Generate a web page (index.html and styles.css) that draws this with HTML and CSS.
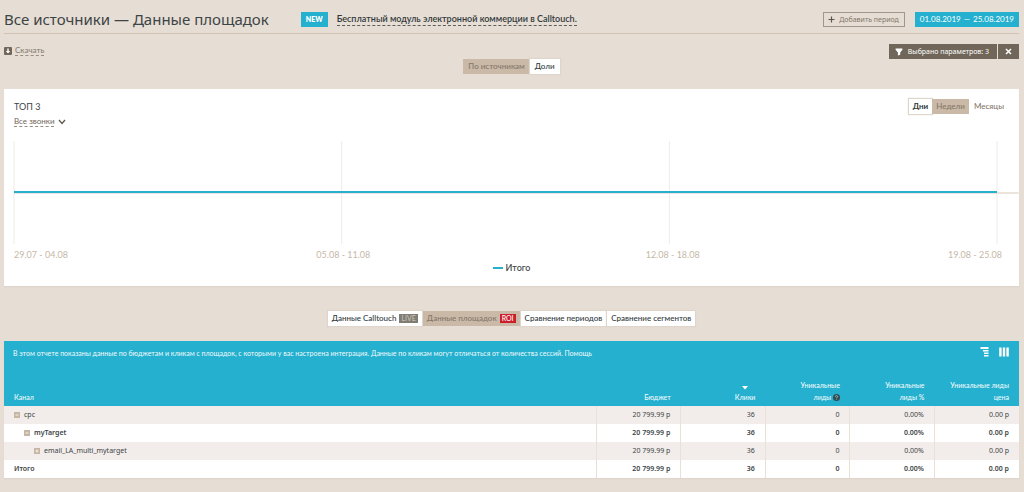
FILE: index.html
```html
<!DOCTYPE html>
<html lang="ru">
<head>
<meta charset="utf-8">
<title>Все источники — Данные площадок</title>
<link rel="stylesheet" href="styles.css">
</head>
<body>
<header class="header">
  <h1 class="title">Все источники — Данные площадок</h1>
  <div class="promo">
    <span class="promo-badge">NEW</span>
    <a class="promo-link" href="#">Бесплатный модуль электронной коммерции в Calltouch.</a>
  </div>
  <button class="add-period" type="button">
    <svg width="7" height="7" viewBox="0 0 7 7" aria-hidden="true"><path d="M3.5 .5v6M.5 3.5h6" stroke="#5f574c" stroke-width="1.2"/></svg>
    Добавить период
  </button>
  <button class="date-range" type="button"><span>01.08.2019</span><span>—</span><span>25.08.2019</span></button>
</header>

<div class="toolbar">
  <a class="download" href="#">
    <svg width="8" height="8" viewBox="0 0 8 8" aria-hidden="true"><rect width="8" height="8" rx="1" fill="#706659"/><path d="M3.3 1.5h1.4v2.4h1.5L4 6.4 1.8 3.9h1.5z" fill="#fff"/></svg>
    <span class="dashed">Скачать</span>
  </a>
  <div class="filter">
    <button class="filter-main" type="button">
      <svg width="8" height="8" viewBox="0 0 8 8" aria-hidden="true"><path d="M.6.5h6.8v1.3L5.2 4.5V6.8L2.9 7.6V4.5L.6 1.8z" fill="#fff"/></svg>
      Выбрано параметров: 3
    </button>
    <button class="filter-clear" type="button" aria-label="Сбросить">
      <svg width="7" height="7" viewBox="0 0 7 7" aria-hidden="true"><path d="M1 1l5 5M6 1L1 6" stroke="#fff" stroke-width="1.5"/></svg>
    </button>
  </div>
</div>

<div class="tabs view-tabs">
  <button class="tab active" type="button">По источникам</button>
  <button class="tab" type="button">Доли</button>
</div>

<section class="card">
  <div class="card-head">
    <div>
      <h2 class="card-title">ТОП 3</h2>
      <button class="metric" type="button">
        <span class="dashed">Все звонки</span>
        <svg width="8" height="6" viewBox="0 0 8 6" aria-hidden="true"><path d="M1 1l3 3.4L7 1" fill="none" stroke="#5f574c" stroke-width="1.3"/></svg>
      </button>
    </div>
    <div class="tabs period-tabs">
      <button class="tab strong" type="button">Дни</button>
      <button class="tab active" type="button">Недели</button>
      <button class="tab plain" type="button">Месяцы</button>
    </div>
  </div>
  <div class="chart">
    <svg class="plot" aria-hidden="true">
      <g stroke="#efebe5">
        <line x1="0" x2="0" y1="0" y2="100%"/>
        <line x1="33.33%" x2="33.33%" y1="0" y2="100%"/>
        <line x1="66.67%" x2="66.67%" y1="0" y2="100%"/>
        <line x1="100%" x2="100%" y1="0" y2="100%"/>
      </g>
      <line x1="0" x2="102.2%" y1="52" y2="52" stroke="#eae4dc" stroke-width="2"/>
      <line x1="0" x2="100%" y1="51" y2="51" stroke="#24b0ce" stroke-width="2"/>
    </svg>
    <div class="axis">
      <span>29.07 - 04.08</span>
      <span>05.08 - 11.08</span>
      <span>12.08 - 18.08</span>
      <span>19.08 - 25.08</span>
    </div>
  </div>
  <div class="legend"><span class="legend-mark"></span>Итого</div>
</section>

<div class="tabs report-tabs">
  <button class="tab" type="button">Данные Calltouch <span class="tag">LIVE</span></button>
  <button class="tab active" type="button">Данные площадок <span class="tag roi">ROI</span></button>
  <button class="tab" type="button">Сравнение периодов</button>
  <button class="tab" type="button">Сравнение сегментов</button>
</div>

<section class="report">
  <div class="report-note">
    <p class="note-text">В этом отчете показаны данные по бюджетам и кликам с площадок, с которыми у вас настроена интеграция. Данные по кликам могут отличаться от количества сессий. <a class="help" href="#">Помощь</a></p>
    <button class="icon-button" type="button" aria-label="Группировка">
      <svg width="10" height="10" viewBox="0 0 10 10" aria-hidden="true"><path d="M.5 0h8v2h-8zM3 3h5.500v1.500H3zM4 5.500h4.500V7H4zM4 8h4.500v1.500H4z" fill="#fff"/></svg>
    </button>
    <button class="icon-button" type="button" aria-label="Столбцы">
      <svg width="10" height="10" viewBox="0 0 10 10" aria-hidden="true"><path d="M.2.5h2.400v9H.2zM3.800.5h2.400v9H3.800zM7.400.5h2.400v9H7.400z" fill="#fff"/></svg>
    </button>
  </div>
  <table class="table">
    <thead>
      <tr>
        <th class="name">Канал</th>
        <th>Бюджет</th>
        <th><svg class="sort" width="6" height="4" viewBox="0 0 6 4" aria-hidden="true"><path d="M0 0h6L3 3.5z" fill="#fff"/></svg>Клики</th>
        <th>Уникальные<br>лиды <svg class="hint" width="7" height="7" viewBox="0 0 7 7" aria-hidden="true"><circle cx="3.5" cy="3.5" r="3.5" fill="#354b50"/><path d="M2.4 2.7c0-1.4 2.2-1.4 2.2 0 0 .8-1 .7-1 1.5M3.6 4.8v.8" fill="none" stroke="#9fd5e2" stroke-width=".8"/></svg></th>
        <th>Уникальные<br>лиды %</th>
        <th>Уникальные лиды<br>цена</th>
      </tr>
    </thead>
    <tbody>
      <tr>
        <td class="name"><button class="toggle" type="button" aria-label="Свернуть"><svg width="6" height="6" viewBox="0 0 6 6"><path d="M1.5 3h3" stroke="#fff" stroke-width=".8"/></svg></button>cpc</td>
        <td>20 799.99 р</td><td>36</td><td>0</td><td>0.00%</td><td>0.00 р</td>
      </tr>
      <tr class="bold">
        <td class="name level-1"><button class="toggle" type="button" aria-label="Свернуть"><svg width="6" height="6" viewBox="0 0 6 6"><path d="M1.5 3h3" stroke="#fff" stroke-width=".8"/></svg></button>myTarget</td>
        <td>20 799.99 р</td><td>36</td><td>0</td><td>0.00%</td><td>0.00 р</td>
      </tr>
      <tr>
        <td class="name level-2"><button class="toggle" type="button" aria-label="Развернуть"><svg width="6" height="6" viewBox="0 0 6 6"><path d="M1.5 3h3M3 1.5v3" stroke="#fff" stroke-width=".8"/></svg></button>email_LA_multi_mytarget</td>
        <td>20 799.99 р</td><td>36</td><td>0</td><td>0.00%</td><td>0.00 р</td>
      </tr>
      <tr class="bold">
        <td class="name">Итого</td>
        <td>20 799.99 р</td><td>36</td><td>0</td><td>0.00%</td><td>0.00 р</td>
      </tr>
    </tbody>
  </table>
</section>
</body>
</html>
```

FILE: styles.css
```css
* { box-sizing: border-box; }

body {
  margin: 0;
  padding: 0 5px 14px 4px;
  background: #e6ddd4;
  color: #3c4446;
  font: 8px/12px Lato, "Noto Sans", sans-serif;
}

button {
  margin: 0;
  padding: 0;
  border: 0;
  background: none;
  color: inherit;
  font: inherit;
  white-space: nowrap;
  cursor: pointer;
}

a { color: inherit; text-decoration: none; }
h1, h2, p { margin: 0; font-weight: 400; }
svg { flex: none; }

.dashed { border-bottom: 1px dashed #978c7f; line-height: 9px; }

.header {
  display: flex;
  align-items: center;
  padding: 5px 0 0;
  height: 34px;
  border-bottom: 1px solid #d3c1b1;
}
.title {
  font-family: "Noto Sans", sans-serif;
  font-size: 15px;
  line-height: 18px;
  white-space: nowrap;
}
.promo { display: flex; align-items: center; margin-left: 32px; }
.promo-badge {
  padding: 0 5px;
  background: #24b0ce;
  color: #fff;
  font-size: 7px;
  font-weight: 800;
  line-height: 15px;
}
.promo-link {
  margin-left: 9px;
  border-bottom: 1px dashed #5b5f5e;
  color: #30393b;
  font-size: 9px;
  font-weight: 600;
  line-height: 12px;
  white-space: nowrap;
}
.add-period {
  display: flex;
  align-items: center;
  gap: 4px;
  margin-left: auto;
  padding: 0 5px 0 4px;
  border: 1px solid #a0978b;
  color: #81776a;
  font-family: "Noto Sans", sans-serif;
  font-size: 7px;
  line-height: 13px;
}
.date-range {
  display: flex;
  gap: 3px;
  margin-left: 10px;
  padding: 0 5px;
  background: #24b0ce;
  color: #fff;
  line-height: 15px;
}

.toolbar {
  display: flex;
  align-items: flex-start;
  justify-content: space-between;
  padding-top: 10px;
}
.download {
  display: flex;
  align-items: center;
  gap: 3px;
  padding-top: 2px;
  color: #81776a;
}
.filter {
  display: flex;
  gap: 1px;
  color: #fff;
  font-family: "Noto Sans", sans-serif;
  font-size: 7px;
  line-height: 15px;
}
.filter-main, .filter-clear {
  display: flex;
  align-items: center;
  background: #706659;
}
.filter-main { gap: 5px; padding: 0 8px 0 6px; }
.filter-clear { padding: 0 7px; }

.tabs { display: flex; }
.tab {
  padding: 0 5px;
  background: #fff;
  box-shadow: 0 0 1px 1px #ded5cb;
  color: #30393b;
  font-weight: 500;
  line-height: 15px;
}
.tab.active { background: #cab9a7; box-shadow: none; color: #84776a; }
.tab.plain { box-shadow: none; color: #84776a; }
.tab.strong { font-weight: 700; }
.view-tabs { justify-content: center; }
.period-tabs .tab { padding: 0 4px; }
.period-tabs .plain { padding: 0 5px; }
.report-tabs { justify-content: center; gap: 1px; padding: 25px 0 15px; }
.report-tabs .tab { padding: 0 4px; }
.tag {
  display: inline-block;
  margin-left: 1px;
  padding: 0 2px;
  background: #807d74;
  color: #c4c0b7;
  font-size: 7px;
  line-height: 9px;
}
.tag.roi { background: #cc1f2b; color: #fff; }

.card {
  margin-top: 15px;
  padding: 10px 0 12px;
  background: #fff;
  box-shadow: 0 1px 1px #ded5cb;
}
.card-head {
  display: flex;
  align-items: flex-start;
  justify-content: space-between;
  padding: 0 10px;
}
.card-title { padding-top: 2px; font-size: 9px; line-height: 12px; }
.metric {
  display: flex;
  align-items: center;
  gap: 4px;
  margin-top: 4px;
  color: #706659;
  line-height: 12px;
}
.chart { margin: 14px 22px 0 10px; }
.plot { display: block; width: 100%; height: 103px; overflow: visible; }
.axis {
  display: grid;
  grid-template-columns: 1fr 2fr 2fr 1fr;
  margin: 4px -5px 0 0;
  color: #c6b8a7;
  font-size: 9px;
  line-height: 14px;
  text-align: center;
}
.axis span:first-child { text-align: left; }
.axis span:last-child { text-align: right; }
.legend {
  display: flex;
  align-items: center;
  justify-content: center;
  gap: 3px;
  font-size: 9px;
  font-weight: 500;
}
.legend-mark { width: 10px; height: 2px; background: #24b0ce; }

.report { background: #24b0ce; box-shadow: 0 1px 1px #ded5cb; font-size: 7px; }
.report-note {
  display: flex;
  align-items: flex-start;
  gap: 9px;
  padding: 6px 10px 20px 9px;
  color: #f0fafc;
  font-weight: 600;
}
.note-text { flex: 1; }
.icon-button svg { display: block; }

.table { width: 100%; border-collapse: collapse; table-layout: fixed; }
.table th {
  padding: 0 10px 3px 0;
  color: #f0fafc;
  font-weight: 500;
  text-align: right;
  vertical-align: bottom;
  white-space: nowrap;
}
.table th:not(.name) { width: 8.33%; }
.table td {
  height: 18px;
  padding: 0 10px 0 0;
  border-left: 1px solid #e9e1d8;
  font-family: "Noto Sans", sans-serif;
  text-align: right;
  white-space: nowrap;
}
.table .name { padding-left: 10px; border-left: 0; text-align: left; }
.table .level-1 { padding-left: 20px; }
.table .level-2 { padding-left: 30px; }
.table tbody tr { background: #fff; }
.table tbody tr:nth-child(odd) { background: #f2edea; }
.bold { font-weight: 600; }
.sort { display: block; margin: 0 7px 1px auto; }
.hint { vertical-align: -1px; }
.toggle { margin-right: 4px; background: #c6b6a3; vertical-align: middle; }
.toggle svg { display: block; }
```
